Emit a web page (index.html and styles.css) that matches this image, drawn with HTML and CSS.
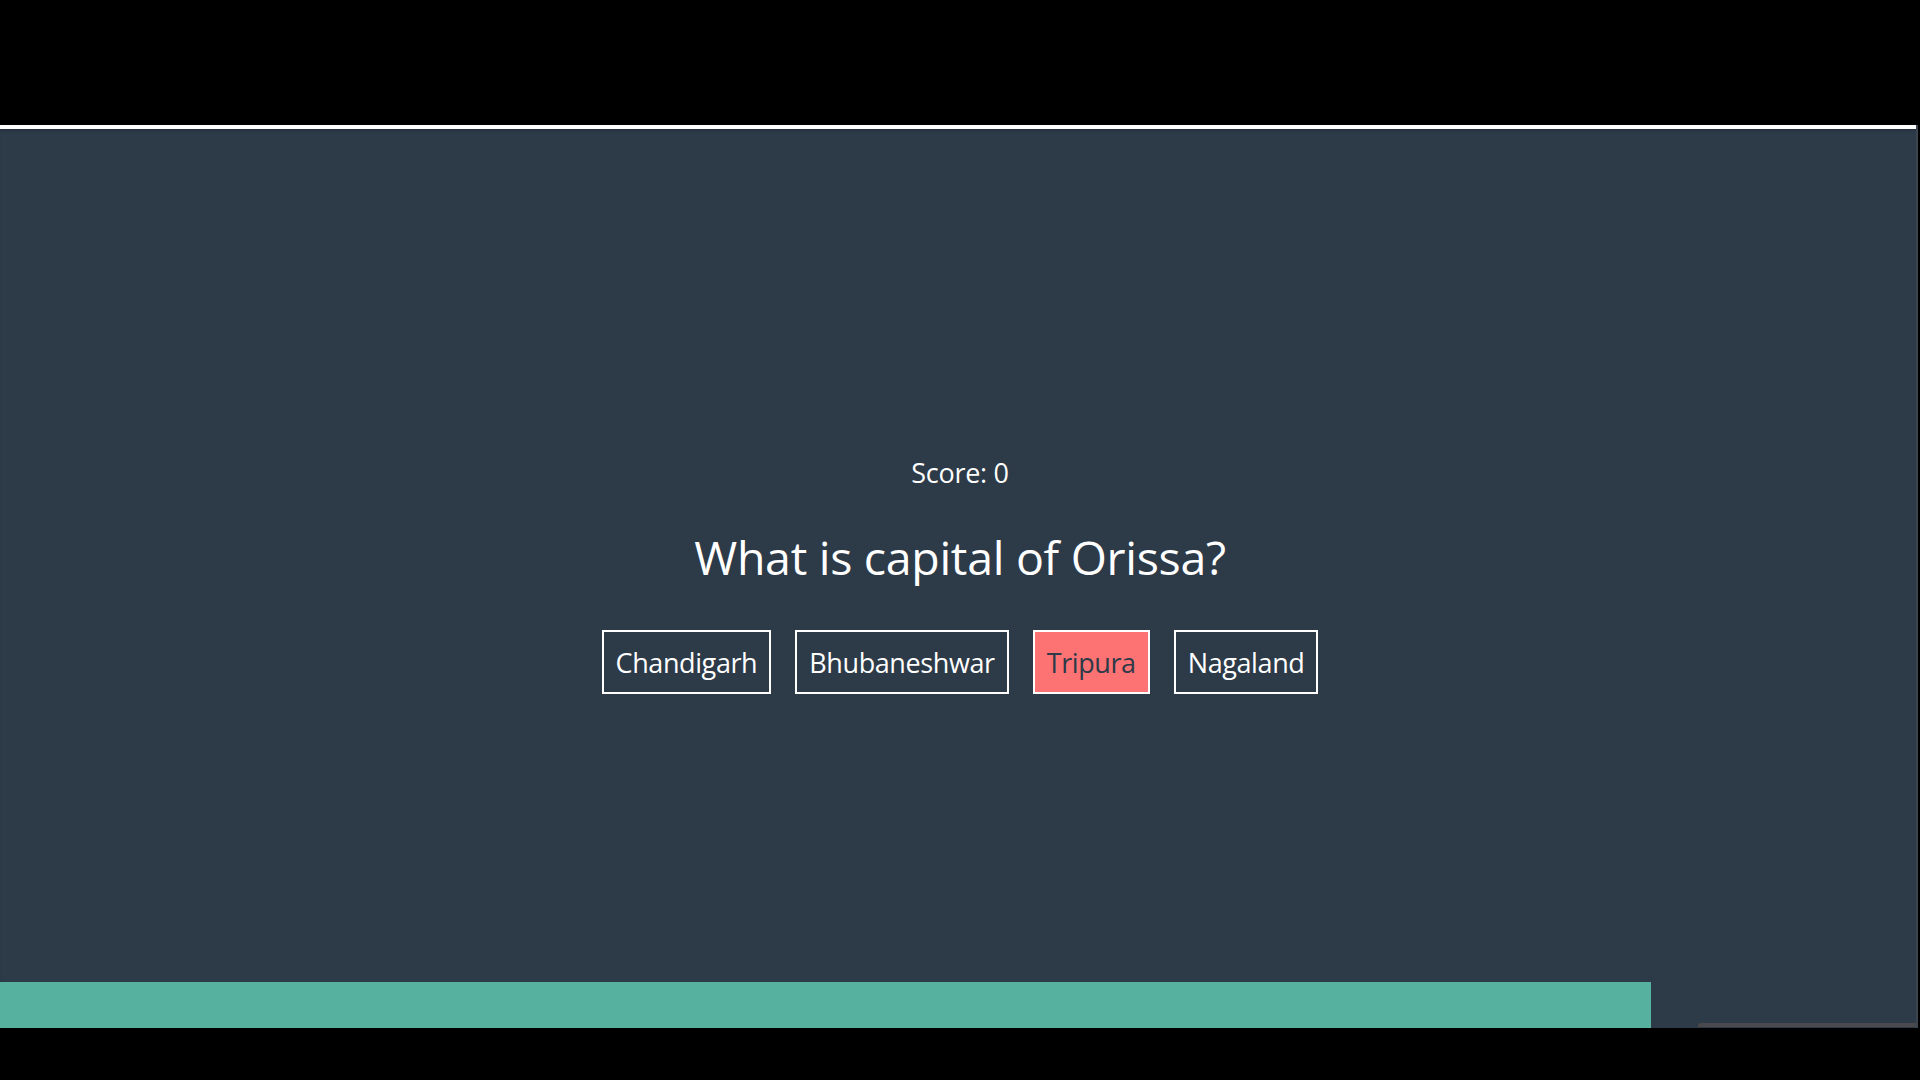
FILE: index.html
```html
<!DOCTYPE html>
<html lang="en">
<head>
<meta charset="utf-8">
<title>Quiz</title>
<link rel="stylesheet" href="styles.css">
</head>
<body>
<div class="screen">
  <div class="topline"></div>
  <div class="app">
    <main class="quiz">
      <div class="score">Score: 0</div>
      <h1 class="question">What is capital of Orissa?</h1>
      <div class="options">
        <button class="option">Chandigarh</button>
        <button class="option">Bhubaneshwar</button>
        <button class="option wrong">Tripura</button>
        <button class="option">Nagaland</button>
      </div>
    </main>
    <div class="progress-row">
      <div class="progress" style="width: 86%"></div>
      <div class="progress-rest"></div>
    </div>
  </div>
  <div class="window-edge"></div>
</div>
</body>
</html>
```
FILE: styles.css
```css
* { box-sizing: border-box; }
html, body { margin: 0; padding: 0; background: #000; }
body {
  width: 1920px;
  height: 1080px;
  overflow: hidden;
  font-family: "Open Sans", "Noto Sans", sans-serif;
  color: #fff;
}
.screen {
  position: relative;
  padding-top: 125px;
  width: 1920px;
}
.topline {
  height: 4px;
  background: #fff;
}
.app {
  background: #2d3a48;
  box-shadow: inset 0 3px 3px -2px #232e3a;
}
.window-edge {
  position: absolute;
  top: 125px;
  right: 0;
  width: 4px;
  height: 903px;
  background: #000;
  border-left: 2px solid #3c4550;
}
.quiz {
  height: 853px;
  padding-top: 327px;
  display: flex;
  flex-direction: column;
  align-items: center;
}
.score {
  font-size: 27px;
  line-height: 34px;
  letter-spacing: -0.3px;
}
.question {
  margin: 36px 0 0;
  font-size: 46.5px;
  font-weight: 400;
  line-height: 62px;
  letter-spacing: -0.3px;
}
.options {
  display: flex;
  gap: 24px;
  margin-top: 42px;
}
.option {
  font-family: inherit;
  font-size: 27px;
  letter-spacing: -0.4px;
  color: #fff;
  background: transparent;
  border: 2px solid #fff;
  height: 64px;
  padding: 0 12px;
}
.option.wrong {
  background: #fd7272;
  color: #2d3a48;
}
.progress-row {
  display: flex;
  height: 46px;
  position: relative;
}
.progress {
  background: #57b19f;
}
.progress-rest {
  flex: 1;
}
.progress-rest::after {
  content: "";
  position: absolute;
  right: 4px;
  bottom: 1px;
  width: 218px;
  height: 4px;
  background: #4a4a4e;
  border-radius: 3px 0 0 0;
}
```
